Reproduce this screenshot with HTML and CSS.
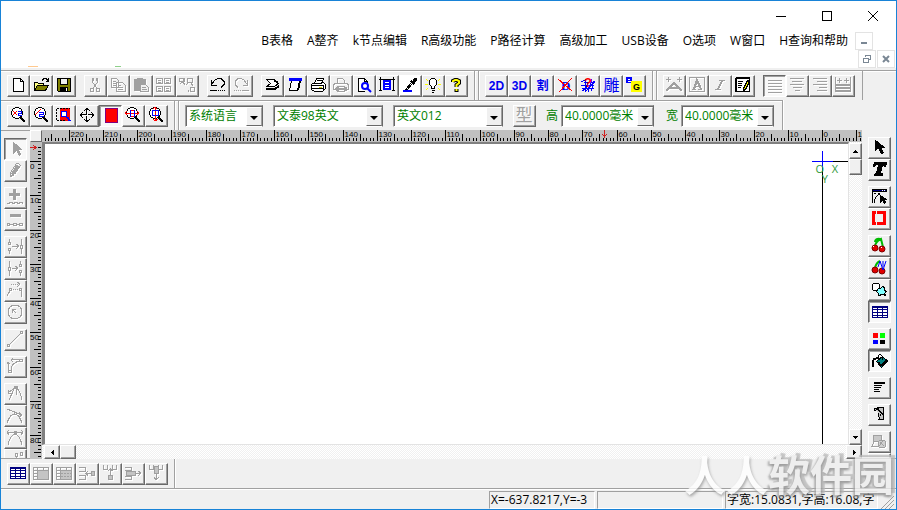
FILE: index.html
```html
<!DOCTYPE html>
<html lang="zh-CN">
<head>
    <meta charset="UTF-8">
    <meta name="viewport" content="width=device-width, initial-scale=1.0">
    <title>文泰雕刻</title>
    <link rel="stylesheet" href="styles.css">
</head>
<body>
<div class="window">

    <header class="top">
        <div class="titlebar">
            <button class="win-btn" aria-label="最小化"><svg class="ic wide" viewBox="0 0 12 12"><path d="M1 6.5h10"/></svg></button>
            <button class="win-btn" aria-label="最大化"><svg class="ic wide" viewBox="0 0 12 12"><path d="M1.5 1.5h9v9h-9z"/></svg></button>
            <button class="win-btn" aria-label="关闭"><svg class="ic wide smooth" viewBox="0 0 12 12"><path d="M1 1l10 10M11 1L1 11"/></svg></button>
        </div>
        <nav class="menubar">
            <button>B表格</button>
            <button>A整齐</button>
            <button>k节点编辑</button>
            <button>R高级功能</button>
            <button>P路径计算</button>
            <button>高级加工</button>
            <button>USB设备</button>
            <button>O选项</button>
            <button>W窗口</button>
            <button>H查询和帮助</button>
            <button class="mdi" aria-label="最小化文档"><svg class="ic mdi-ic" viewBox="0 0 10 10"><path d="M2 7h6" stroke-width="2"/></svg></button>
        </nav>
        <div class="mdi-row">
            <span class="logo-edge"><i class="orange"></i><i class="green"></i></span>
            <button class="mdi" aria-label="还原文档"><svg class="ic mdi-ic" viewBox="0 0 10 10"><path d="M1.5 4.5h5v4h-5zM1 4h6M3.5 3V1.5h5v4H7M3 1h6"/></svg></button>
            <button class="mdi" aria-label="关闭文档"><svg class="ic mdi-ic smooth" viewBox="0 0 10 10"><path d="M2 2l6 6M8 2L2 8" stroke-width="2"/></svg></button>
        </div>
    </header>

    <!-- main toolbar -->
    <div class="bar bar-main">
        <div class="group">
            <button class="tool" aria-label="新建"><svg class="ic" viewBox="0 0 16 16"><path fill="#fff" d="M3.500 1.500h7l3 3v10h-10z"/><path d="M10.500 1.500v3h3"/></svg></button>
            <button class="tool" aria-label="打开"><svg class="ic" viewBox="0 0 16 16"><path fill="#ffff80" d="M1.500 13.500v-8h3l1 1h5v3"/><path fill="#808000" d="M1.500 13.500l3-5h11l-3 5z"/><path d="M9 3.500l2-2h2l2 2M15.500 1v3h-3"/></svg></button>
            <button class="tool" aria-label="保存"><svg class="ic" viewBox="0 0 16 16"><path fill="#808000" d="M1.500 1.500h13v13h-12l-1-1z"/><path fill="#f0f0f0" d="M4.500 1.500h7v6h-7z"/><path fill="#000" d="M4.500 10.500h7v4h-7z"/><path stroke="#fff" d="M10.500 11v3"/></svg></button>
        </div>
        <div class="group">
            <button class="tool" aria-label="剪切" disabled><svg class="ic" viewBox="0 0 16 16"><path d="M5.500 1v4l4 6M10.500 1v4l-4 6M6.500 1v3M9.500 1v3"/><circle cx="5" cy="13" r="2"/><circle cx="11" cy="13" r="2"/></svg></button>
            <button class="tool" aria-label="复制" disabled><svg class="ic" viewBox="0 0 16 16"><path d="M1.500 1.500h5l2 2v7h-7zM6.500 5.500h6l3 3v6h-9zM3 4.500h3M3 6.500h3M3 8.500h3M8 8.500h3M8 10.500h5M8 12.500h5"/></svg></button>
            <button class="tool" aria-label="粘贴" disabled><svg class="ic" viewBox="0 0 16 16"><path fill="#a0a0a0" d="M1.500 2.500h3v-1h5v1h3v11h-11z"/><path fill="#f0f0f0" d="M7.500 7.500h5l3 3v4h-8z"/><path d="M9 10.500h4M9 12.500h5"/></svg></button>
            <button class="tool" aria-label="拼版" disabled><svg class="ic" viewBox="0 0 16 16"><path d="M.5 1.500h6v5h-6zM8.500 1.500h6v5h-6zM.5 9.500h6v5h-6zM8.500 9.500h6v5h-6zM2 3.500h3M2 5.500h3M10 3.500h3M10 5.500h3M2 11.500h3M2 13.500h3M10 11.500h3M10 13.500h3"/></svg></button>
            <button class="tool" aria-label="阵列" disabled><svg class="ic" viewBox="0 0 16 16"><path d="M.5 1.500h4v3h-4zM3 4l3 4M5 1v4M8.500 1.500h5v4h-5zM9 6l-2 2M11.500 10.500h4v4h-4zM12 6l2 3M10 13l-1 2M1 7l2-2"/></svg></button>
        </div>
        <div class="group">
            <button class="tool" aria-label="撤销"><svg class="ic" viewBox="0 0 16 16"><path d="M1.500 3v5h5M2 7l3-4 3-1.500h3l3 3v3l-3 3M0 13.500h7M8 13.500h1M10 13.500h1M12 13.500h1M14 13.500h1"/></svg></button>
            <button class="tool" aria-label="重做" disabled><svg class="ic" viewBox="0 0 16 16"><path d="M14.500 3v5h-5M14 7l-3-4-3-1.500H5l-3 3v3l3 3M9 13.500h7M8 13.500H7M6 13.500H5M4 13.500H3M2 13.500H1"/></svg></button>
        </div>
        <div class="group">
            <button class="tool" aria-label="刀路"><svg class="ic" viewBox="0 0 16 16"><path fill="#fff" d="M2.500 2.500h8l4 4-4 3h-8l4-3z"/><path stroke-width="2" d="M2 12h9l4-3M10 3l4 3"/></svg></button>
            <button class="tool" aria-label="版面"><svg class="ic" viewBox="0 0 16 16"><path fill="#fff" d="M4.500 3.500h8l-2 10h-8z"/><path fill="#00f" stroke="#00f" d="M2.500 1.500h12v2h-12z"/><path d="M11.500 13l2-9"/></svg></button>
            <button class="tool" aria-label="打印"><svg class="ic" viewBox="0 0 16 16"><path fill="#fff" d="M1.500 7.500l3-2h9l2 2v4l-3 3h-8l-3-2z"/><path fill="#fff" d="M4.500 6.500l2-5h7l-2 5z"/><path d="M7 3.500h5M1 8.500h12M1 11.500h12M13.500 8v5"/><path stroke="#cc0" d="M9 10.500h3"/></svg></button>
            <button class="tool" aria-label="打印设置" disabled><svg class="ic" viewBox="0 0 16 16"><path d="M4.500 6V1.500h5l2 2V6M1.500 6.500h13l1 2v4h-15v-4zM4.500 9.500h7v5h-7zM2 11.500h12"/><path fill="#a0a0a0" d="M3 10h2v3H3zM11 10h2v3h-2z"/></svg></button>
            <button class="tool" aria-label="打印预览"><svg class="ic" viewBox="0 0 16 16"><path fill="#fff" d="M9 14.500H2.500v-13h6l3 3v3"/><path d="M8.500 1.500v3h3"/><g class="smooth" stroke="#00f" stroke-width="2"><circle cx="9" cy="9" r="3"/><path d="M11 11l4 4"/></g></svg></button>
            <button class="tool" aria-label="全图"><svg class="ic" viewBox="0 0 16 16"><path d="M0 2.500h16M1.500 0v14M14.500 0v14M0 13.500h3M13 13.500h3"/><path fill="#00f" stroke="#00f" d="M4.500 3.500h7v9h-7z"/><path stroke="#fff" d="M6 5.500h4M6 8.500h4M6 10.500h4"/></svg></button>
            <button class="tool pale" aria-label="吸管"><svg class="ic" viewBox="0 0 16 16"><path stroke="#00f" stroke-width="2" d="M1 14h9"/><path fill="#fff" d="M3.500 12.500l6-7 1 1-5 6z"/><path fill="#000" d="M8.500 4.500l2-1 2-2h2v2l-2 2-1 2z"/></svg></button>
            <button class="tool" aria-label="提示"><svg class="ic" viewBox="0 0 16 16"><path stroke="#ff0" d="M1 2l2 2M0 7.500h3M1 13l2-2M15 2l-2 2M16 7.500h-3M15 13l-2-2"/><path fill="#fff" d="M6.500 1.500h3l2 2v4l-2 2v2h-3v-2l-2-2v-4zM6.500 13.500h3M7 15h2"/></svg></button>
            <button class="tool" aria-label="帮助"><svg class="ic smooth" viewBox="0 0 16 16"><path stroke-width="4" d="M5 5V4l2-1h2l2 1v2L8.500 8v2M8.500 12v3"/><path stroke="#ff0" stroke-width="2" d="M5 5V4l2-1h2l2 1v2L8.500 8v2M8.500 12v2"/></svg></button>
        </div>
        <span class="sep"></span>
        <div class="group">
            <button class="tool word">2D</button>
            <button class="tool word">3D</button>
            <button class="tool word">割</button>
            <button class="tool" aria-label="删除D"><svg class="ic" viewBox="0 0 16 16"><text class="blue-letter" x="4" y="13">D</text><path stroke="#f00" d="M1 2l14 12M15 1L2 15"/></svg></button>
            <button class="tool" aria-label="检查"><svg class="ic" viewBox="0 0 16 16"><path stroke="#00f" d="M1 5l4-2v9l-3 2M1 8h13M2 11h12M8 5l-3 10M12 2l-4 13M14 4l-3 10M4 5h11M6 14l9-10"/><text class="red-letter" x="4" y="10">?</text></svg></button>
            <button class="tool word carve">雕</button>
            <button class="tool" aria-label="转换"><svg class="ic" viewBox="0 0 16 16"><path fill="#00f" stroke="#00f" d="M.5.5h5v5h-5z"/><path stroke="#fff" d="M2 2h2M2 4h3"/><path fill="#ff0" stroke="#ff0" d="M5.500 4.500h10v10h-10z"/><text class="small-letter" x="7" y="13">G</text></svg></button>
        </div>
        <span class="sep"></span>
        <div class="group">
            <button class="tool" aria-label="弧形字" disabled><svg class="ic" viewBox="0 0 16 16"><path d="M0 2.500h5M2.500 0v5M11 2.500h5M13.500 0v5"/><path stroke-width="2" d="M0 14l8-8 8 8M4 11h8"/></svg></button>
            <button class="tool" aria-label="文字框" disabled><svg class="ic" viewBox="0 0 16 16"><path d="M.5.5h15v14H.5zM3 12.500h4M9 12.500h4M5.500 9.500h5"/><path stroke-width="2" d="M5 12l3-9 4 9"/></svg></button>
            <button class="tool" aria-label="斜体" disabled><svg class="ic" viewBox="0 0 16 16"><path d="M7 3.500h6M3 12.500h6"/><path stroke-width="2" d="M10 4l-4 8"/></svg></button>
            <button class="tool" aria-label="编辑文字"><svg class="ic" viewBox="0 0 16 16"><path fill="#fff" d="M1.500 1.500h13v13h-13z"/><path d="M1 .5h14M.5 1v14M3 4.500h5M3 6.500h4M3 8.500h4M3 10.500h3"/><path fill="#ff0" d="M8.500 11.500l4-8 2 1-4 8-2 1z"/></svg></button>
        </div>
        <div class="group">
            <button class="tool pressed" aria-label="左对齐" disabled><svg class="ic" viewBox="0 0 16 16"><path d="M1 2.500h14M1 5.500h14M1 8.500h14M1 11.500h14M1 14.500h14"/></svg></button>
            <button class="tool" aria-label="居中" disabled><svg class="ic" viewBox="0 0 16 16"><path d="M1 1.500h14M3 4.500h10M1 7.500h14M4 10.500h9M6 13.500h5"/></svg></button>
            <button class="tool" aria-label="右对齐" disabled><svg class="ic" viewBox="0 0 16 16"><path d="M1 1.500h14M5 4.500h10M1 7.500h14M7 10.500h8M5 13.500h10"/></svg></button>
            <button class="tool" aria-label="分散对齐" disabled><svg class="ic" viewBox="0 0 16 16"><path d="M.5 0v15M15.500 0v15M2 3.500h5M4.500 1v5M9 3.500h5M11.500 1v5"/><path stroke-width="2" d="M1 8h14M1 11h14M1 14h14"/></svg></button>
        </div>
    </div>

    <!-- view and font toolbar -->
    <div class="bar bar-font">
        <div class="group">
            <button class="tool" aria-label="缩小"><svg class="ic" viewBox="0 0 16 16"><circle class="lens" cx="7" cy="6" r="5.500"/><path stroke-width="2" d="M10 10l5 5"/><path stroke="#f00" d="M3 4l4 4M7 4L3 8"/><path stroke="#00f" d="M8 4.500h3v2H8v2h4"/></svg></button>
            <button class="tool" aria-label="放大"><svg class="ic" viewBox="0 0 16 16"><circle class="lens" cx="7" cy="6" r="5.500"/><path stroke-width="2" d="M10 10l5 5"/><path stroke="#f00" d="M2 8l6-6"/><path stroke="#00f" d="M6 5.500h4v2H6v2h5"/></svg></button>
            <button class="tool" aria-label="窗口放大"><svg class="ic" viewBox="0 0 16 16"><path fill="#f00" stroke="#f00" d="M4.500 1.500h9v12h-9z"/><path stroke-dasharray="2 1" d="M.5 1.500h13M.5 1.500v12M.5 13.500h8"/><g stroke="#00f" fill="#fff"><circle cx="8" cy="7" r="3"/><path stroke-width="2" d="M11 10l3 4"/></g></svg></button>
            <button class="tool" aria-label="平移"><svg class="ic" viewBox="0 0 16 16"><path d="M7.500 1v13M8.500 1v13M1 7.500h14M1 8.500h14M5 4l3-3 3 3M5 12l3 3 3-3M4 5L1 8l3 3M12 5l3 3-3 3"/><path stroke="#fff" d="M8 3v10M3 8h10"/></svg></button>
            <button class="tool pressed" aria-label="填充显示"><svg class="ic" viewBox="0 0 16 16"><path fill="#f00" stroke="#800080" d="M2.500.5h12v14h-12z"/></svg></button>
            <button class="tool" aria-label="横向适配"><svg class="ic" viewBox="0 0 16 16"><circle class="lens" cx="7" cy="6" r="5.500"/><path stroke-width="2" d="M10 10l5 5"/><path stroke="#f00" d="M0 6.500h14M2 4l-2 2 2 2M12 4l2 2-2 2M5 3.500h5M5 9.500h5"/><path stroke="#00f" d="M5.500 3v7M9.500 3v7"/></svg></button>
            <button class="tool" aria-label="纵向适配"><svg class="ic" viewBox="0 0 16 16"><circle class="lens" cx="7" cy="6" r="5.500"/><path stroke-width="2" d="M10 10l5 5"/><path stroke="#f00" d="M7.500 0v14M5 2l2-2 2 2M5 12l2 2 3-2"/><path stroke="#00f" d="M4.500 3.500h6v5h-6z"/></svg></button>
        </div>
        <span class="sep"></span>
        <div class="group fields">
            <label class="combo combo-small">
                <select aria-label="语言"><option>系统语言</option></select>
                <span class="arrow"></span>
            </label>
            <label class="combo">
                <select aria-label="中文字体"><option>文泰98英文</option></select>
                <span class="arrow"></span>
            </label>
            <label class="combo">
                <select aria-label="英文字体"><option>英文012</option></select>
                <span class="arrow"></span>
            </label>
            <button class="tool shape" disabled>型</button>
            <div class="measure">
                <label for="charHeight">高</label>
                <span class="combo combo-size"><input id="charHeight" value="40.0000毫米"><button class="arrow" aria-label="选择高度"></button></span>
            </div>
            <div class="measure">
                <label for="charWidth">宽</label>
                <span class="combo combo-size"><input id="charWidth" value="40.0000毫米"><button class="arrow" aria-label="选择宽度"></button></span>
            </div>
        </div>
    </div>

    <div class="main">
        <!-- node tools -->
        <aside class="side side-left">
            <div class="stack">
                <button class="tool pressed" aria-label="选择" disabled><svg class="ic" viewBox="0 0 16 16"><path fill="#a0a0a0" d="M5.500 1.500v11l3-3 3 5 1-1-2-5h3z"/></svg></button>
                <button class="tool" aria-label="铅笔" disabled><svg class="ic" viewBox="0 0 16 16"><path d="M3.500 14.500v-4l6-9h2l2 2-6 9zM4 11l3 2M9 3l3 2M6 10l4-6"/><path fill="#a0a0a0" d="M5 11l5-8 2 2-5 7z"/></svg></button>
            </div>
            <div class="stack">
                <button class="tool" aria-label="增加节点" disabled><svg class="ic" viewBox="0 0 16 16"><path stroke-width="3" d="M2 5.500h11M7.500 0v11"/><path d="M0 14.500h2v-1h3v1h2v-1h3v1h2v-1h3v1"/></svg></button>
                <button class="tool" aria-label="删除节点" disabled><svg class="ic" viewBox="0 0 16 16"><path stroke-width="3" d="M3 4.500h11"/><path d="M.5 12.500h2v2h-2zM6.500 12.500h3v2h-3zM12.500 12.500h3v2h-3zM3 13.500h4M9 13.500h4"/></svg></button>
            </div>
            <div class="stack">
                <button class="tool" aria-label="连接节点" disabled><svg class="ic" viewBox="0 0 16 16"><path d="M2.500 1v3M1.500 4.500h2v2h-2zM1.500 10.500h2v2h-2zM2.500 13v3M5 8.500h7M9 6l3 2-3 3M14.500 1v6M13.500 7.500h2v3h-2zM14.500 11v5"/></svg></button>
                <button class="tool" aria-label="断开节点" disabled><svg class="ic" viewBox="0 0 16 16"><path d="M2.500 1v6M1.500 7.500h2v3h-2zM2.500 11v5M5 8.500h6M8 6l3 2-3 3M13.500 1v3M12.500 4.500h2v2h-2zM12.500 10.500h2v2h-2zM13.500 13v3"/></svg></button>
                <button class="tool" aria-label="闭合" disabled><svg class="ic" viewBox="0 0 16 16"><path stroke-dasharray="1 1" d="M4 2.500h8M4 7.500h8"/><path d="M10 0l3 2-3 3M2.500 6.500h2v2h-2zM12.500 6.500h2v2h-2zM3 9l-3 5M14 9v6"/></svg></button>
                <button class="tool" aria-label="圆" disabled><svg class="ic" viewBox="0 0 16 16"><circle cx="8" cy="8" r="7"/><path d="M5 5l4 4M5 9V5h4"/></svg></button>
            </div>
            <div class="stack">
                <button class="tool" aria-label="直线" disabled><svg class="ic" viewBox="0 0 16 16"><path d="M2 14L14 2M.5 13.500h2v2h-2zM13.500.5h2v2h-2z"/></svg></button>
            </div>
            <div class="stack">
                <button class="tool" aria-label="弧线" disabled><svg class="ic" viewBox="0 0 16 16"><path d="M1.500 15V4M0 6l1-2 2 2M1.500 12.500h3v2h-3zM4 12c0-5 4-9 10-9M4 1.500h10M6 0L4 2l2 2M12.500 1.500h3v2h-3z"/></svg></button>
            </div>
            <div class="stack">
                <button class="tool" aria-label="尖角" disabled><svg class="ic" viewBox="0 0 16 16"><path d="M2 15L8 2M15 15C14 8 11 4 9 2M9 2L1 8M9 2v8M7.500 1.500h3v2h-3zM1 5v3h3"/></svg></button>
                <button class="tool" aria-label="光滑" disabled><svg class="ic" viewBox="0 0 16 16"><path d="M0 2l15 6M0 16c4-12 11-12 15 0M7.500 5.500h2v2h-2zM12 5l3 3-3 2"/></svg></button>
                <button class="tool" aria-label="对称" disabled><svg class="ic" viewBox="0 0 16 16"><path d="M0 3.500h16M2 1L0 3l2 3M14 1l2 2-2 3M7.500 2.500h2v2h-2zM1 16c3-14 11-14 14 0"/></svg></button>
                <button class="tool" aria-label="分割" disabled><svg class="ic" viewBox="0 0 16 16"><path d="M8.500 2.500h2v3h-2zM13.500 1.500h2v3h-2zM9 6v4"/></svg></button>
            </div>
        </aside>

        <div class="workspace">
            <span class="corner"></span>
            <svg class="ruler ruler-h" id="rulerH"></svg>
            <svg class="ruler ruler-v" id="rulerV"></svg>
            <div class="canvas">
                <span class="axis-y"></span>
                <span class="axis-x"></span>
                <span class="cross-y"></span>
                <span class="cross-x"></span>
                <span class="mark mark-o">O</span>
                <span class="mark mark-x">X</span>
                <span class="mark mark-y">Y</span>
            </div>
            <div class="scroll scroll-v">
                <button class="scroll-btn" aria-label="向上"><svg class="ic tri" viewBox="0 0 7 7"><path d="M1 5h5L3.500 2z"/></svg></button>
                <span class="thumb"></span>
                <button class="scroll-btn last" aria-label="向下"><svg class="ic tri" viewBox="0 0 7 7"><path d="M1 2h5L3.500 5z"/></svg></button>
            </div>
            <div class="scroll scroll-h">
                <button class="scroll-btn" aria-label="向左"><svg class="ic tri" viewBox="0 0 7 7"><path d="M5 1v5L2 3.500z"/></svg></button>
                <span class="thumb"></span>
                <button class="scroll-btn last" aria-label="向右"><svg class="ic tri" viewBox="0 0 7 7"><path d="M2 1v5l3-2.500z"/></svg></button>
            </div>
        </div>

        <!-- object tools -->
        <aside class="side side-right">
            <div class="stack">
                <button class="tool" aria-label="选择对象"><svg class="ic" viewBox="0 0 16 16"><path fill="#000" d="M4.500 1.500v10l3-3 3 6 2-1-3-5h4z"/></svg></button>
                <button class="tool" aria-label="文字"><svg class="ic" viewBox="0 0 16 16"><path fill="#000" d="M3.500 1.500h12l-1 4h-1l-1-2h-1l-2 9h2v2h-8v-1l2-1 2-9h-2l-2 2h-1z"/></svg></button>
            </div>
            <div class="stack">
                <button class="tool" aria-label="节点编辑"><svg class="ic" viewBox="0 0 16 16"><path fill="#000080" d="M1.500 1.500h14v2h-14z"/><path stroke="#fff" d="M11 2.500h1M13 2.500h1"/><path d="M1.500 3v12M3 15c1-6 3-8 6-9M3 5.500h2M7 5.500h2"/><path fill="#000" d="M9.500 7.500v7l2-2 2 3 1-1-1-3h2z"/></svg></button>
                <button class="tool" aria-label="造型"><svg class="ic" viewBox="0 0 16 16"><path stroke="#f00" stroke-width="3" d="M5 2.500H2.500v11H5M6 2.500h7.500v11H6"/></svg></button>
            </div>
            <div class="stack">
                <button class="tool" aria-label="图库"><svg class="ic smooth" viewBox="0 0 16 16"><path stroke="#0b0" stroke-width="2" d="M4 9c1-5 4-6 6-7l2 8M9 2c-3-1-5 1-5 3"/><circle cx="4" cy="11" r="3" fill="#e00000" stroke="#800000"/><circle cx="11" cy="12" r="3" fill="#e00000" stroke="#800000"/><path stroke="#fff" d="M2 10l1-1M10 11l1-1"/></svg></button>
                <button class="tool" aria-label="图库曲线"><svg class="ic smooth" viewBox="0 0 16 16"><path stroke="#0b0" stroke-width="2" d="M4 9c1-5 3-6 5-7"/><circle cx="4" cy="11" r="3" fill="#e00000" stroke="#800000"/><circle cx="11" cy="12" r="3" fill="#e00000" stroke="#800000"/><path stroke="#00f" d="M7 8l2-6 3 9 3-9M12 2v6"/></svg></button>
                <button class="tool" aria-label="图形"><svg class="ic" viewBox="0 0 16 16"><circle cx="5" cy="6" r="4" fill="#fff"/><path fill="#80ffff" d="M7.500 7.500h2l2-2 2 1v3l2 1-2 2 1 2-3-1-4 1v-2l-2-2z"/></svg></button>
                <button class="tool pressed" aria-label="表格"><svg class="ic" viewBox="0 0 16 16"><path stroke="#000080" fill="#fff" d="M.5 2.500h15v11H.5zM.5 8.500h15M.5 11.500h15M5.500 3v11M10.500 3v11M.5 5.500h15"/><path stroke="#000080" stroke-width="2" d="M0 3h16"/></svg></button>
            </div>
            <div class="stack">
                <button class="tool" aria-label="颜色"><svg class="ic" viewBox="0 0 16 16"><g stroke="none"><path fill="#f00" d="M2 3h5v5H2z"/><path fill="#0f0" d="M9 3h5v5H9z"/><path fill="#00f" d="M2 10h5v4H2z"/><path fill="#000" d="M9 10h5v4H9z"/></g></svg></button>
                <button class="tool pressed" aria-label="填充"><svg class="ic" viewBox="0 0 16 16"><path fill="#008080" d="M4.500 8.500l6-5 5 5-6 6z"/><path d="M6 7V3l2-2 2 2v4"/><path stroke-width="2" d="M6 5L2 6 1 8v6M9 13l6-6M6 9l3 4"/></svg></button>
            </div>
            <div class="stack">
                <button class="tool" aria-label="排列"><svg class="ic" viewBox="0 0 16 16"><path stroke-width="2" d="M3 4h11"/><path d="M3 6.500h8M3 8.500h7M3 10.500h5M3 12.500h6"/></svg></button>
            </div>
            <div class="stack">
                <button class="tool" aria-label="刀具"><svg class="ic" viewBox="0 0 16 16"><path fill="#c0c0c0" d="M6.500 1.500h6v12h-4z"/><path stroke-width="3" d="M3 3h3l5 6"/><path stroke="#ccc" d="M4 3l7 6"/><path d="M12.500 1v13M7 13.500h5"/></svg></button>
            </div>
            <div class="stack">
                <button class="tool" aria-label="组合" disabled><svg class="ic" viewBox="0 0 16 16"><path fill="#c8c8c8" d="M2.500 2.500h8v6h-8z"/><circle cx="11" cy="11" r="4" fill="#d0d0d0"/><path d="M3 9l-2 4h6M9 9l4 4M12 8l-4 5"/></svg></button>
                <button class="tool" aria-label="拆分" disabled></button>
            </div>
        </aside>
    </div>

    <!-- table toolbar -->
    <div class="bar bar-table">
        <div class="group">
            <button class="tool" aria-label="插入表格"><svg class="ic" viewBox="0 0 16 16"><path stroke="#000080" fill="#fff" d="M.5 2.500h15v11H.5zM.5 8.500h15M.5 11.500h15M5.500 3v11M10.500 3v11M.5 5.500h15"/><path stroke="#000080" stroke-width="2" d="M0 3h16"/></svg></button>
            <button class="tool" aria-label="选择单元格" disabled><svg class="ic" viewBox="0 0 16 16"><path d="M.5 2.500h15v12H.5zM.5 5.500h15M4.500 3v12M10.500 3v3M1 8.500h3M1 11.500h3"/><path fill="#c4c4c4" d="M4.500 5.500h11v9h-11z"/></svg></button>
            <button class="tool" aria-label="单元格属性" disabled><svg class="ic" viewBox="0 0 16 16"><path d="M.5 2.500h15v12H.5zM.5 5.500h15M4.500 3v12M10.500 3v3M1 8.500h3M1 11.500h3"/><path fill="#c4c4c4" d="M4.500 5.500h11v9h-11z"/><path stroke-dasharray="2 1" d="M5 8.500h10M5 11.500h10"/></svg></button>
            <button class="tool" aria-label="插入列" disabled><svg class="ic" viewBox="0 0 16 16"><path d="M0 2.500h6v4H0M0 10.500h6v4H0M6 8.500h6M9 6L7 8l2 3"/><path fill="#c4c4c4" d="M12.500 6.500h3v4h-3z"/></svg></button>
            <button class="tool" aria-label="插入行" disabled><svg class="ic" viewBox="0 0 16 16"><path d="M1.500 0v4h4V0M10.500 0v4h4V0M8.500 3v8M6 6l2-2 3 2"/><path fill="#c4c4c4" d="M6.500 10.500h4v4h-4z"/></svg></button>
            <button class="tool" aria-label="删除列" disabled><svg class="ic" viewBox="0 0 16 16"><path d="M0 2.500h6v3H0M0 11.500h6v3H0M9 8.500h7M13 6l3 2-3 3"/><path fill="#c4c4c4" d="M1.500 6.500h9v4h-9z"/></svg></button>
            <button class="tool" aria-label="删除行" disabled><svg class="ic" viewBox="0 0 16 16"><path d="M1.500 0v4h4V0M10.500 0v4h4V0M8.500 8v7M6 12l2 3 3-3"/><path fill="#c4c4c4" d="M6.500 1.500h4v7h-4z"/></svg></button>
        </div>
    </div>

    <footer class="status">
        <span class="cell cell-pos">X=-637.8217,Y=-3</span>
        <span class="cell cell-mid"></span>
        <span class="cell cell-font">字宽:15.0831,字高:16.08,字</span>
        <svg class="ic grip" viewBox="0 0 14 14"><path d="M1 14L14 1M5 14l9-9M9 14l5-5"/></svg>
    </footer>

    <div class="watermark">人人<span class="heavy">软件园</span></div>
</div>
<script src="script.js"></script>
</body>
</html>
```
FILE: styles.css
```css
* {
    box-sizing: border-box;
}
body {
    margin: 0;
    font-family: "Open Sans", "Noto Sans CJK SC", sans-serif;
    font-size: 12px;
    line-height: 16px;
    color: #000;
    background: #f0f0f0;
}
button, input, select {
    font: inherit;
    color: inherit;
    margin: 0;
    padding: 0;
    border: 0;
    background: none;
}
.window {
    position: relative;
    display: flex;
    flex-direction: column;
    height: 100vh;
    border: 1px solid #1883d7;
    overflow: hidden;
}

/* icons */
.ic {
    display: block;
    flex: none;
    width: 16px;
    height: 16px;
    fill: none;
    stroke: #000;
    shape-rendering: crispEdges;
}
.smooth {
    shape-rendering: auto;
}
.ic.wide {
    width: 12px;
    height: 12px;
}
.ic.mdi-ic {
    width: 10px;
    height: 10px;
    stroke: #7a8794;
}
.ic.tri {
    width: 7px;
    height: 7px;
    fill: #000;
    stroke: none;
}
.lens {
    fill: #fff;
}
.blue-letter, .red-letter, .small-letter {
    font: bold 13px "Liberation Serif", serif;
    fill: #00f;
    stroke: none;
}
.red-letter {
    fill: #f00;
    font-family: "Liberation Sans", sans-serif;
}
.small-letter {
    fill: #000;
    font-family: "Liberation Sans", sans-serif;
    font-size: 9px;
}

/* title and menu */
.top {
    background: #fff;
    margin-left: -1px;
    margin-bottom: 2px;
}
.titlebar {
    display: flex;
    justify-content: flex-end;
    height: 31px;
}
.win-btn {
    display: flex;
    align-items: center;
    justify-content: center;
    width: 46px;
    height: 29px;
}
.menubar {
    display: flex;
    justify-content: flex-end;
    align-items: center;
    gap: 14px;
    height: 18px;
    padding-right: 23px;
    white-space: nowrap;
}
.mdi {
    display: flex;
    align-items: center;
    justify-content: center;
    width: 18px;
    height: 18px;
    border: 1px solid #e3e3e3;
}
.menubar .mdi {
    margin-left: -7px;
}
.mdi-row {
    display: flex;
    gap: 1px;
    padding-right: 1px;
}
.logo-edge {
    display: flex;
    flex: 1;
    align-items: flex-end;
    padding: 0 0 1px 28px;
    gap: 77px;
}
.orange, .green {
    width: 10px;
    height: 1px;
    background: #ffc98f;
}
.green {
    width: 6px;
    background: #8ed08a;
}

/* toolbars */
.bar {
    display: flex;
    align-self: flex-start;
    padding-left: 6px;
    border-top: 1px solid #a0a0a0;
    border-right: 1px solid #a0a0a0;
    box-shadow: inset 0 1px #fff, 1px 0 #fff;
}
.group {
    display: flex;
    padding: 4px 0 3px;
}
.bar-main {
    align-self: stretch;
    gap: 8px;
    border-right: 0;
}
.bar-main .group:last-child {
    padding-right: 7px;
    border-right: 1px solid #a0a0a0;
}
.bar-main .sep {
    margin: 0 -2px;
}
.sep {
    flex: none;
    width: 5px;
    margin: 0 6px;
    border-left: 1px solid #a0a0a0;
    border-right: 1px solid #a0a0a0;
    box-shadow: inset 1px 0 #fff, 1px 0 #fff;
}
.tool {
    display: flex;
    flex: none;
    align-items: center;
    justify-content: center;
    width: 23px;
    height: 22px;
    padding: 0 1px 2px 0;
    border: 1px solid #fff;
    border-right-color: #696969;
    border-bottom-color: #696969;
    box-shadow: inset -1px -1px #a0a0a0;
    background: #f0f0f0;
    overflow: hidden;
}
.tool:disabled {
    color: #a0a0a0;
}
.tool:disabled .ic {
    stroke: #a0a0a0;
    filter: drop-shadow(1px 1px 0 #fff);
}
.tool.pressed {
    padding: 0;
    border-color: #696969 #fff #fff #696969;
    box-shadow: inset 1px 1px #a0a0a0;
    background: #f8f8f8;
}
.tool.pale {
    background: #fff;
}
.tool.word {
    padding: 0;
    color: #0000f0;
    font-family: "Liberation Sans", "Noto Sans CJK SC", sans-serif;
    font-size: 12px;
    font-weight: 700;
}
.tool.carve {
    font-size: 16px;
    font-weight: 400;
}
.tool.shape {
    font-size: 17px;
    text-shadow: 1px 1px #fff;
}
.fields {
    gap: 10px;
    padding-right: 8px;
}
.combo {
    position: relative;
    display: flex;
    width: 110px;
    height: 22px;
    border: 1px solid #a0a0a0;
    border-right-color: #696969;
    border-bottom-color: #fff;
    box-shadow: inset 1px 1px #696969;
    background: #fff;
    color: #008000;
}
.combo-small {
    width: 78px;
}
.combo-size {
    width: 93px;
}
.combo select, .combo input {
    flex: 1;
    width: 100%;
    min-width: 0;
    padding: 0 2px 0 3px;
    appearance: none;
    outline: 0;
}
.arrow {
    position: absolute;
    top: 1px;
    right: 0;
    bottom: 0;
    width: 16px;
    border: 1px solid #fff;
    border-right-color: #a0a0a0;
    border-bottom-color: #696969;
    background: #f0f0f0;
    pointer-events: none;
}
.arrow::after {
    content: "";
    position: absolute;
    top: 8px;
    left: 3px;
    border: 4px solid transparent;
    border-top-color: #000;
    border-bottom: 0;
}
.measure {
    display: flex;
    align-items: center;
    gap: 3px;
    color: #008000;
}
.measure + .measure {
    margin-left: 2px;
}

/* work area */
.main {
    display: flex;
    flex: 1;
    min-height: 0;
}
.side {
    display: flex;
    flex: none;
    flex-direction: column;
    gap: 5px;
    overflow: hidden;
}
.side-left {
    width: 29px;
    padding: 7px 0 0 3px;
    border-top: 1px solid #a0a0a0;
    border-bottom: 1px solid #a0a0a0;
}
.side-right {
    width: 34px;
    padding: 7px 0 0 6px;
    border-bottom: 1px solid #a0a0a0;
}
.workspace {
    display: grid;
    flex: 1;
    grid-template-columns: 12px 1fr 13px;
    grid-template-rows: 12px 1fr 14px;
    min-width: 0;
}
.corner {
    border: 1px solid #fff;
    border-right-color: #696969;
    border-bottom-color: #696969;
}
.ruler {
    display: block;
    width: 100%;
    height: 100%;
    min-height: 0;
    background: #c0c0c0;
    shape-rendering: crispEdges;
}
.ruler line {
    stroke: #000;
}
.ruler .pointer {
    fill: none;
    stroke: #d02020;
}
.ruler text {
    font: 8px "Liberation Sans", Arial, sans-serif;
}
.ruler-h {
    grid-column: 2 / 4;
}
.ruler-v {
    grid-column: 1;
    grid-row: 2 / 4;
}
.canvas {
    position: relative;
    grid-column: 2;
    grid-row: 2;
    border-top: 2px solid #808080;
    border-left: 3px solid #808080;
    border-right: 1px solid #e3e3e3;
    border-bottom: 1px solid #e3e3e3;
    background: #fff;
    overflow: hidden;
}
.axis-x, .axis-y, .cross-x, .cross-y, .mark {
    position: absolute;
}
.axis-x {
    top: 17px;
    right: 0;
    width: 26px;
    height: 1px;
    background: #000;
}
.axis-y {
    top: 17px;
    right: 25px;
    bottom: 0;
    width: 1px;
    background: #000;
}
.cross-x {
    top: 17px;
    right: 15px;
    width: 21px;
    height: 1px;
    background: #00f;
}
.cross-y {
    top: 7px;
    right: 25px;
    width: 1px;
    height: 20px;
    background: #00f;
}
.mark {
    color: #2f9a3c;
    font-size: 11px;
    line-height: 12px;
}
.mark-o {
    top: 19px;
    right: 24px;
}
.mark-x {
    top: 19px;
    right: 10px;
}
.mark-y {
    top: 29px;
    right: 20px;
}
.scroll {
    display: flex;
    background: repeating-conic-gradient(#fff 0 25%, #f0f0f0 0 50%) 0 0 / 2px 2px;
}
.scroll-v {
    grid-column: 3;
    grid-row: 2;
    flex-direction: column;
    padding-top: 1px;
}
.scroll-h {
    grid-column: 2 / 4;
    grid-row: 3;
    padding-left: 2px;
}
.scroll-btn, .thumb {
    display: flex;
    flex: none;
    align-items: center;
    justify-content: center;
    width: 16px;
    border: 1px solid #fff;
    border-right-color: #696969;
    border-bottom-color: #696969;
    box-shadow: inset -1px -1px #a0a0a0;
    background: #f0f0f0;
}
.scroll-v .scroll-btn, .scroll-v .thumb {
    width: 100%;
    height: 16px;
}
.scroll-v .last {
    margin-top: auto;
}
.scroll-h .last {
    margin-left: auto;
}

/* bottom */
.bar-table {
    border-top: 0;
    padding-right: 6px;
    box-shadow: 1px 0 #fff;
}
.status {
    display: flex;
    gap: 2px;
    padding: 2px 2px 0 488px;
    border-top: 1px solid #a0a0a0;
    box-shadow: inset 0 1px #fff;
    white-space: nowrap;
}
.cell {
    flex: none;
    height: 18px;
    padding-left: 1px;
    border: 1px solid #a0a0a0;
    border-right-color: #fff;
    border-bottom-color: #fff;
    overflow: hidden;
}
.cell-pos {
    width: 106px;
}
.cell-mid {
    flex: 1;
}
.cell-font {
    width: 153px;
}
.grip {
    width: 14px;
    height: 14px;
    align-self: flex-end;
    stroke: #a0a0a0;
}
.watermark {
    position: absolute;
    right: 2px;
    bottom: 16px;
    color: #fff;
    font-size: 42px;
    font-weight: 700;
    line-height: 36px;
    text-shadow: 1px 2px 3px #999;
    opacity: 0.8;
    pointer-events: none;
}
.heavy {
    color: #eee;
    text-shadow: 1px 2px 3px #888, 4px -2px 1px #bbb, -2px 2px 2px #aaa;
}
```
FILE: script.js
```js
const STEP = 34.25; // pixels for 10 mm

function draw(svg, tag, attrs, text) {
    const el = document.createElementNS("http://www.w3.org/2000/svg", tag);
    for (const key in attrs) el.setAttribute(key, attrs[key]);
    if (text !== undefined) el.textContent = text;
    svg.appendChild(el);
}

function tickLength(i) {
    if (i % 10 === 0) return 11;
    return i % 5 === 0 ? 7 : 3;
}

function drawRulers() {
    const h = document.getElementById("rulerH");
    const v = document.getElementById("rulerV");
    const width = h.clientWidth || h.getBoundingClientRect().width;
    const height = v.clientHeight || v.getBoundingClientRect().height;
    const origin = width - 40;
    h.innerHTML = "";
    v.innerHTML = "";

    for (let i = -11; ; i++) {
        const x = Math.round(origin - i * STEP / 10) + 0.5;
        if (x < 2) break;
        draw(h, "line", { x1: x, x2: x, y1: 11 - tickLength(i), y2: 11 });
        if (i % 10 === 0) draw(h, "text", { x: x + 1, y: 7 }, Math.abs(i));
    }
    for (let i = -4; ; i++) {
        const y = Math.round(19 + i * STEP / 10) + 0.5;
        if (y > height) break;
        draw(v, "line", { x1: 11 - tickLength(i), x2: 11, y1: y, y2: y });
        if (i % 10 === 0) draw(v, "text", { x: 0, y: y + 7 }, i);
    }
    const p = Math.round(width - 258) + 0.5;
    draw(h, "path", { class: "pointer", d: `M${p} 0v7M${p - 2} 4l2 3 2-3` });
    draw(v, "path", { class: "pointer", d: "M0 5.5h6M3 3l3 2.500-3 2.500" });
}

drawRulers();
window.addEventListener("resize", drawRulers);
```
